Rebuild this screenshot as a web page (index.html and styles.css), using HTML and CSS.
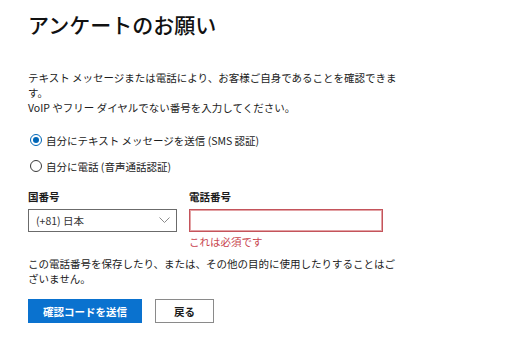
FILE: index.html
```html
<!DOCTYPE html>
<html lang="ja">
<head>
  <meta charset="UTF-8">
  <title>アンケートのお願い</title>
  <link rel="stylesheet" href="styles.css">
</head>
<body>
  <div class="page">
    <h1>アンケートのお願い</h1>
    <p class="intro">テキスト メッセージまたは電話により、お客様ご自身であることを確認できます。<br>VoIP やフリー ダイヤルでない番号を入力してください。</p>

    <div class="options">
      <label class="option"><span class="radio checked"></span>自分にテキスト メッセージを送信 (SMS 認証)</label>
      <label class="option"><span class="radio"></span>自分に電話 (音声通話認証)</label>
    </div>

    <div class="fields">
      <div class="field country">
        <div class="label">国番号</div>
        <div class="select">
          <span>(+81) 日本</span>
          <svg width="11" height="7" viewBox="0 0 11 7"><polyline points="0.5,0.5 5.5,5.5 10.5,0.5" fill="none" stroke="#8a8a8a" stroke-width="1"/></svg>
        </div>
      </div>
      <div class="field phone">
        <div class="label">電話番号</div>
        <div class="input error"></div>
        <div class="error-text">これは必須です</div>
      </div>
    </div>

    <p class="note">この電話番号を保存したり、または、その他の目的に使用したりすることはございません。</p>

    <div class="buttons">
      <button class="btn primary">確認コードを送信</button>
      <button class="btn secondary">戻る</button>
    </div>
  </div>
</body>
</html>
```

FILE: styles.css
```css
body {
  margin: 0;
  background-color: #fff;
  color: #1b1b1b;
  font-family: "Noto Sans CJK JP", "Noto Sans", sans-serif;
  font-size: 10.5px;
}

.page {
  width: 371px;
  padding: 10px 28px 0;
}

h1 {
  margin: 0 0 32px;
  font-size: 21px;
  line-height: 28px;
  font-weight: 500;
  color: #111;
}

.intro, .note {
  margin: 0;
  line-height: 15px;
}

.options {
  display: flex;
  flex-direction: column;
  gap: 6px;
  margin-top: 15px;
}

.option {
  display: flex;
  align-items: center;
  gap: 4px;
  height: 20px;
  padding-left: 2px;
}

.radio {
  width: 12px;
  height: 12px;
  border: 1.5px solid #3a3a3a;
  border-radius: 50%;
  box-sizing: border-box;
  position: relative;
  flex-shrink: 0;
}

.radio.checked {
  border-color: #0067b8;
}

.radio.checked::after {
  content: "";
  position: absolute;
  left: 1.5px;
  top: 1.5px;
  width: 6px;
  height: 6px;
  border-radius: 50%;
  background-color: #0067b8;
}

.fields {
  display: flex;
  gap: 12px;
  margin-top: 13px;
}

.label {
  font-weight: bold;
  line-height: 15px;
  margin-bottom: 5px;
}

.country {
  width: 149px;
}

.phone {
  width: 194px;
}

.select, .input {
  box-sizing: border-box;
  height: 23px;
  border: 1px solid #6b6b6b;
}

.select {
  display: flex;
  align-items: center;
  justify-content: space-between;
  padding: 0 6px 0 7px;
  color: #333;
}

.input.error {
  border: 1px solid #c4545b;
  box-shadow: inset 0 0 0 1px #e3a2a5;
}

.error-text {
  margin-top: 2px;
  line-height: 15px;
  color: #c8454e;
}

.note {
  margin-top: 7px;
}

.buttons {
  display: flex;
  gap: 13px;
  margin-top: 13px;
}

.btn {
  height: 24px;
  font-family: inherit;
  font-size: 10.5px;
  font-weight: bold;
  padding: 0;
  cursor: pointer;
}

.primary {
  width: 114px;
  border: none;
  background-color: #0a72cf;
  color: #fff;
}

.secondary {
  width: 59px;
  border: 1px solid #8a8a8a;
  background-color: #fff;
  color: #1b1b1b;
}
```
